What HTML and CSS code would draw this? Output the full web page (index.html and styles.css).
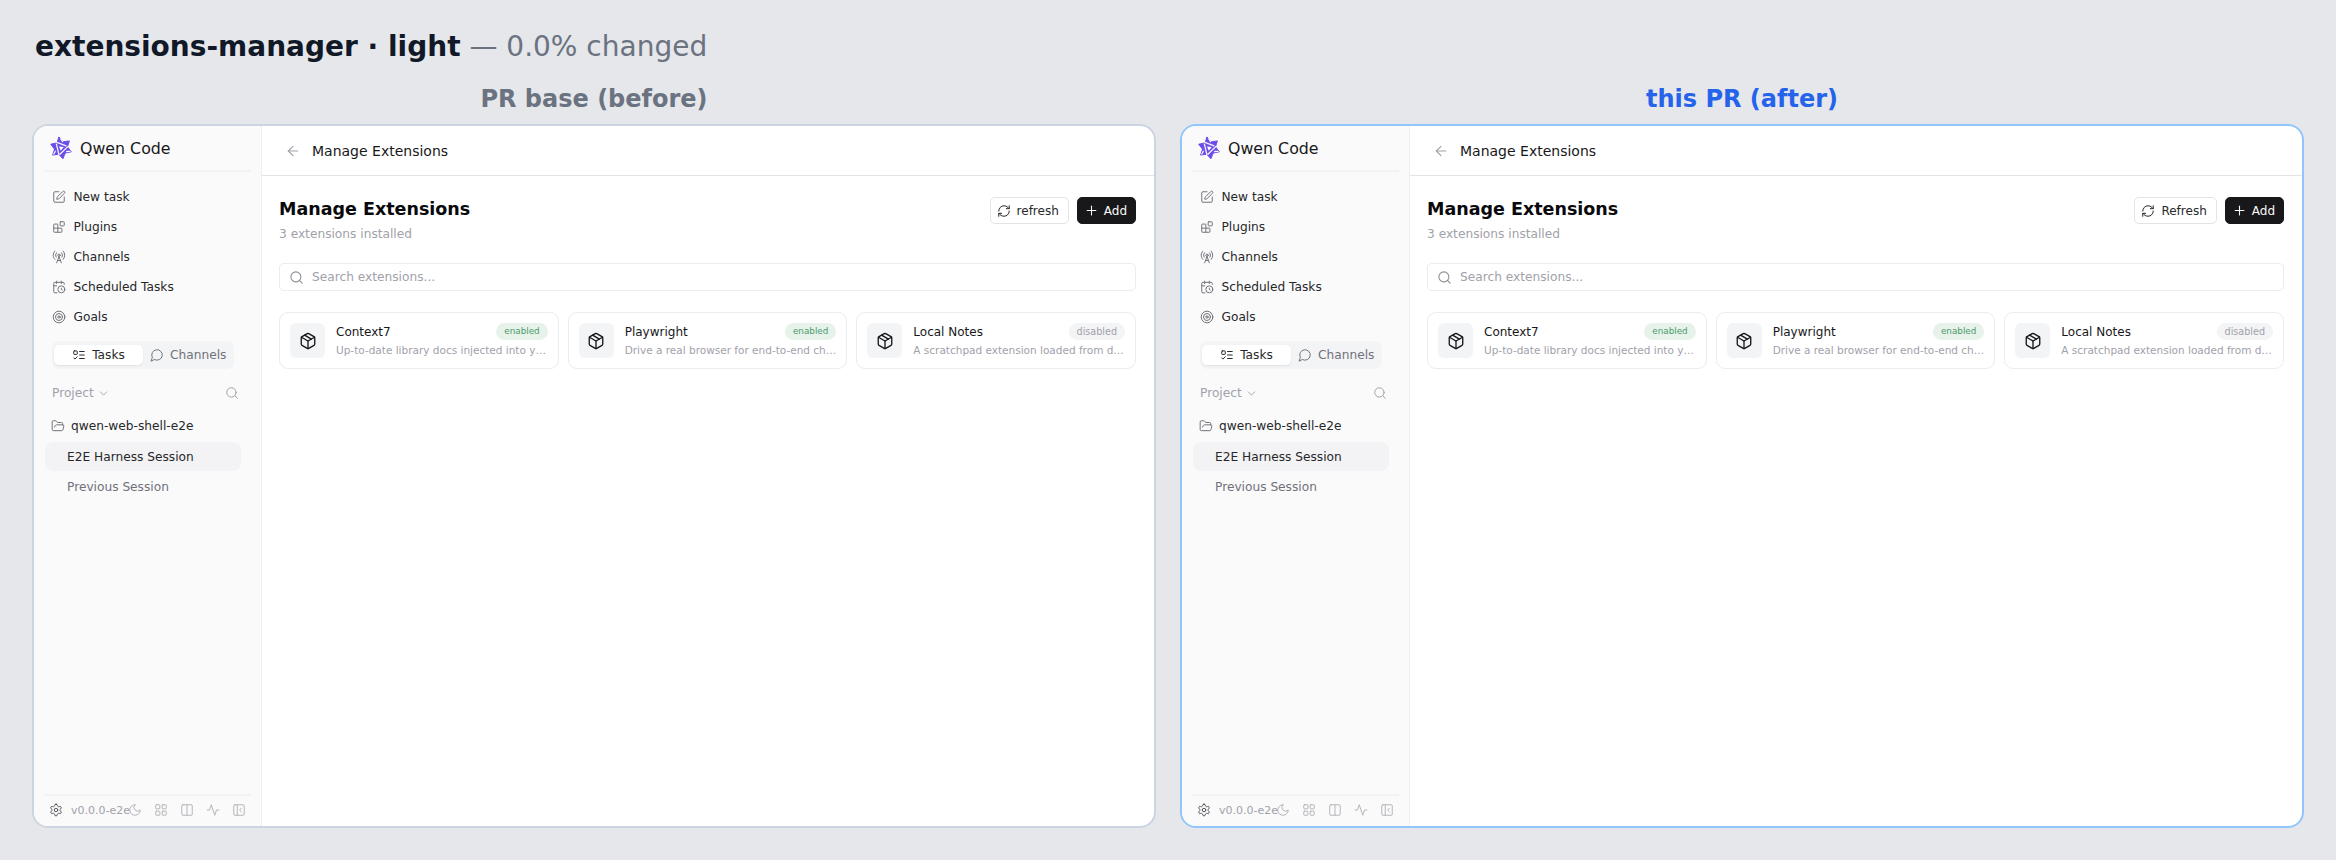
FILE: index.html
```html
<!DOCTYPE html>
<html lang="en">
<head>
<meta charset="utf-8">
<title>extensions-manager · light</title>
<link rel="stylesheet" href="styles.css">
</head>
<body>
<svg class="defs" width="0" height="0" aria-hidden="true">
  <symbol id="logo" viewBox="0 0 24 24">
    <path d="M10.100 1.200 14.300 5.800 20.400 4.900 18.500 10.850 22.300 15.800 16.200 17.050 13.900 22.800 9.700 18.200 3.600 19.100 5.500 13.150 1.700 8.200 7.750 6.950Z" fill="#6d4de8" stroke="#6d4de8" stroke-width="1" stroke-linejoin="round"/>
    <path d="M10 10.400 14.700 11 11.800 14.800Z" fill="#fff" stroke="none"/>
    <path d="M8 6.400 17 9.800M18.800 10.600 11.200 18M9.900 18.700 7.400 8.200M11.800 2.800 13.600 5.600M21 15.400 17.700 15.500M4.800 18 6.300 15.300" fill="none" stroke="#f5f3ff" stroke-width="1.300" stroke-linecap="round"/>
  </symbol>
  <symbol id="pen" viewBox="0 0 24 24"><path d="M12 3H5a2 2 0 0 0-2 2v14a2 2 0 0 0 2 2h14a2 2 0 0 0 2-2v-7"/><path d="M18.375 2.625a1 1 0 0 1 3 3l-9.013 9.014a2 2 0 0 1-.853.505l-2.873.84a.5.5 0 0 1-.62-.62l.84-2.873a2 2 0 0 1 .506-.852z"/></symbol>
  <symbol id="blocks" viewBox="0 0 24 24"><rect width="7" height="7" x="14" y="3" rx="1"/><path d="M10 21V8a1 1 0 0 0-1-1H4a1 1 0 0 0-1 1v12a1 1 0 0 0 1 1h12a1 1 0 0 0 1-1v-5a1 1 0 0 0-1-1H3"/></symbol>
  <symbol id="tower" viewBox="0 0 24 24"><path d="M4.900 16.100C1 12.200 1 5.800 4.900 1.900"/><path d="M7.800 4.700a6.140 6.140 0 0 0-.8 7.500"/><circle cx="12" cy="9" r="2"/><path d="M16.200 4.800c2 2 2.260 5.110.8 7.470"/><path d="M19.100 1.900a9.960 9.960 0 0 1 0 14.100"/><path d="M9.500 18h5"/><path d="m8 22 4-11 4 11"/></symbol>
  <symbol id="calclock" viewBox="0 0 24 24"><path d="M16 14v2.200l1.600 1"/><path d="M16 2v4"/><path d="M21 7.500V6a2 2 0 0 0-2-2H5a2 2 0 0 0-2 2v14a2 2 0 0 0 2 2h3.500"/><path d="M3 10h5"/><path d="M8 2v4"/><circle cx="16" cy="16" r="6"/></symbol>
  <symbol id="target" viewBox="0 0 24 24"><circle cx="12" cy="12" r="10"/><circle cx="12" cy="12" r="6"/><circle cx="12" cy="12" r="2"/></symbol>
  <symbol id="todo" viewBox="0 0 24 24"><rect x="3" y="5" width="6" height="6" rx="1"/><path d="m3 17 2 2 4-4"/><path d="M13 6h8"/><path d="M13 12h8"/><path d="M13 18h8"/></symbol>
  <symbol id="message" viewBox="0 0 24 24"><path d="M7.900 20A9 9 0 1 0 4 16.100L2 22Z"/></symbol>
  <symbol id="chevron" viewBox="0 0 24 24"><path d="m6 9 6 6 6-6"/></symbol>
  <symbol id="search" viewBox="0 0 24 24"><circle cx="11" cy="11" r="8"/><path d="m21 21-4.300-4.300"/></symbol>
  <symbol id="folder" viewBox="0 0 24 24"><path d="m6 14 1.500-2.900A2 2 0 0 1 9.240 10H20a2 2 0 0 1 1.940 2.500l-1.540 6a2 2 0 0 1-1.950 1.500H4a2 2 0 0 1-2-2V5a2 2 0 0 1 2-2h3.900a2 2 0 0 1 1.690.9l.81 1.200a2 2 0 0 0 1.670.9H18a2 2 0 0 1 2 2v2"/></symbol>
  <symbol id="gear" viewBox="0 0 24 24"><path d="M12.220 2h-.44a2 2 0 0 0-2 2v.18a2 2 0 0 1-1 1.730l-.43.25a2 2 0 0 1-2 0l-.15-.08a2 2 0 0 0-2.730.73l-.22.38a2 2 0 0 0 .73 2.730l.15.1a2 2 0 0 1 1 1.720v.51a2 2 0 0 1-1 1.740l-.15.09a2 2 0 0 0-.73 2.730l.22.38a2 2 0 0 0 2.730.73l.15-.08a2 2 0 0 1 2 0l.43.25a2 2 0 0 1 1 1.730V20a2 2 0 0 0 2 2h.44a2 2 0 0 0 2-2v-.18a2 2 0 0 1 1-1.730l.43-.25a2 2 0 0 1 2 0l.15.08a2 2 0 0 0 2.730-.73l.22-.39a2 2 0 0 0-.73-2.730l-.15-.08a2 2 0 0 1-1-1.740v-.5a2 2 0 0 1 1-1.740l.15-.09a2 2 0 0 0 .73-2.730l-.22-.38a2 2 0 0 0-2.730-.73l-.15.08a2 2 0 0 1-2 0l-.43-.25a2 2 0 0 1-1-1.730V4a2 2 0 0 0-2-2z"/><circle cx="12" cy="12" r="3"/></symbol>
  <symbol id="moon" viewBox="0 0 24 24"><path d="M12 3a6 6 0 0 0 9 9 9 9 0 1 1-9-9Z"/></symbol>
  <symbol id="grid" viewBox="0 0 24 24"><rect width="7" height="7" x="3" y="3" rx="1"/><rect width="7" height="7" x="14" y="3" rx="1"/><rect width="7" height="7" x="14" y="14" rx="1"/><rect width="7" height="7" x="3" y="14" rx="1"/></symbol>
  <symbol id="columns" viewBox="0 0 24 24"><rect width="18" height="18" x="3" y="3" rx="2"/><path d="M12 3v18"/></symbol>
  <symbol id="activity" viewBox="0 0 24 24"><path d="M22 12h-4l-3 9L9 3l-3 9H2"/></symbol>
  <symbol id="panel" viewBox="0 0 24 24"><rect width="18" height="18" x="3" y="3" rx="2"/><path d="M9 3v18"/><path d="m16 15-3-3 3-3"/></symbol>
  <symbol id="arrow" viewBox="0 0 24 24"><path d="m12 19-7-7 7-7"/><path d="M19 12H5"/></symbol>
  <symbol id="refresh" viewBox="0 0 24 24"><path d="M3 12a9 9 0 0 1 9-9 9.750 9.750 0 0 1 6.740 2.740L21 8"/><path d="M21 3v5h-5"/><path d="M21 12a9 9 0 0 1-9 9 9.750 9.750 0 0 1-6.740-2.740L3 16"/><path d="M8 16H3v5"/></symbol>
  <symbol id="plus" viewBox="0 0 24 24"><path d="M5 12h14"/><path d="M12 5v14"/></symbol>
  <symbol id="package" viewBox="0 0 24 24"><path d="M11 21.730a2 2 0 0 0 2 0l7-4A2 2 0 0 0 21 16V8a2 2 0 0 0-1-1.730l-7-4a2 2 0 0 0-2 0l-7 4A2 2 0 0 0 3 8v8a2 2 0 0 0 1 1.730z"/><path d="M12 22V12"/><path d="m3.300 7 8.700 5 8.700-5"/><path d="m7.500 4.270 9 5.150"/></symbol>
</svg>

<h1 class="title"><b>extensions-manager · light</b> <span>— 0.0% changed</span></h1>

<div class="compare">
  <section class="col">
    <h2 class="label">PR base (before)</h2>
    <div class="frame">
      <aside class="sidebar">
        <div class="brand"><svg class="logo"><use href="#logo"/></svg><span>Qwen Code</span></div>
        <nav class="nav">
          <a class="nav-item"><svg class="ic"><use href="#pen"/></svg>New task</a>
          <a class="nav-item"><svg class="ic"><use href="#blocks"/></svg>Plugins</a>
          <a class="nav-item"><svg class="ic"><use href="#tower"/></svg>Channels</a>
          <a class="nav-item"><svg class="ic"><use href="#calclock"/></svg>Scheduled Tasks</a>
          <a class="nav-item"><svg class="ic"><use href="#target"/></svg>Goals</a>
        </nav>
        <div class="segment">
          <div class="seg active"><svg class="ic"><use href="#todo"/></svg>Tasks</div>
          <div class="seg"><svg class="ic"><use href="#message"/></svg>Channels</div>
        </div>
        <div class="project-head"><span class="project-label">Project<svg class="ic-sm"><use href="#chevron"/></svg></span><svg class="ic-sm search-ic"><use href="#search"/></svg></div>
        <div class="folder"><svg class="ic"><use href="#folder"/></svg>qwen-web-shell-e2e</div>
        <div class="session current">E2E Harness Session</div>
        <div class="session">Previous Session</div>
        <footer class="foot">
          <div class="foot-left"><svg class="ic gear"><use href="#gear"/></svg><span class="version">v0.0.0-e2e</span></div>
          <svg class="ic fi"><use href="#moon"/></svg>
          <svg class="ic fi"><use href="#grid"/></svg>
          <svg class="ic fi"><use href="#columns"/></svg>
          <svg class="ic fi"><use href="#activity"/></svg>
          <svg class="ic fi"><use href="#panel"/></svg>
        </footer>
      </aside>
      <main class="main">
        <header class="topbar"><svg class="back"><use href="#arrow"/></svg><span>Manage Extensions</span></header>
        <div class="content">
          <div class="head">
            <div><div class="heading">Manage Extensions</div><div class="sub">3 extensions installed</div></div>
            <div class="actions">
              <button class="btn"><svg class="ic"><use href="#refresh"/></svg>refresh</button>
              <button class="btn primary"><svg class="ic"><use href="#plus"/></svg>Add</button>
            </div>
          </div>
          <div class="searchbox"><svg class="search-field"><use href="#search"/></svg>Search extensions...</div>
          <div class="cards">
            <article class="card"><div class="pkg"><svg><use href="#package"/></svg></div><div class="card-body"><div class="card-top"><span class="name">Context7</span><span class="badge on">enabled</span></div><div class="desc">Up-to-date library docs injected into your prompts</div></div></article>
            <article class="card"><div class="pkg"><svg><use href="#package"/></svg></div><div class="card-body"><div class="card-top"><span class="name">Playwright</span><span class="badge on">enabled</span></div><div class="desc">Drive a real browser for end-to-end checks and more</div></div></article>
            <article class="card"><div class="pkg"><svg><use href="#package"/></svg></div><div class="card-body"><div class="card-top"><span class="name">Local Notes</span><span class="badge">disabled</span></div><div class="desc">A scratchpad extension loaded from disk at startup</div></div></article>
          </div>
        </div>
      </main>
    </div>
  </section>

  <section class="col after">
    <h2 class="label">this PR (after)</h2>
    <div class="frame">
      <aside class="sidebar">
        <div class="brand"><svg class="logo"><use href="#logo"/></svg><span>Qwen Code</span></div>
        <nav class="nav">
          <a class="nav-item"><svg class="ic"><use href="#pen"/></svg>New task</a>
          <a class="nav-item"><svg class="ic"><use href="#blocks"/></svg>Plugins</a>
          <a class="nav-item"><svg class="ic"><use href="#tower"/></svg>Channels</a>
          <a class="nav-item"><svg class="ic"><use href="#calclock"/></svg>Scheduled Tasks</a>
          <a class="nav-item"><svg class="ic"><use href="#target"/></svg>Goals</a>
        </nav>
        <div class="segment">
          <div class="seg active"><svg class="ic"><use href="#todo"/></svg>Tasks</div>
          <div class="seg"><svg class="ic"><use href="#message"/></svg>Channels</div>
        </div>
        <div class="project-head"><span class="project-label">Project<svg class="ic-sm"><use href="#chevron"/></svg></span><svg class="ic-sm search-ic"><use href="#search"/></svg></div>
        <div class="folder"><svg class="ic"><use href="#folder"/></svg>qwen-web-shell-e2e</div>
        <div class="session current">E2E Harness Session</div>
        <div class="session">Previous Session</div>
        <footer class="foot">
          <div class="foot-left"><svg class="ic gear"><use href="#gear"/></svg><span class="version">v0.0.0-e2e</span></div>
          <svg class="ic fi"><use href="#moon"/></svg>
          <svg class="ic fi"><use href="#grid"/></svg>
          <svg class="ic fi"><use href="#columns"/></svg>
          <svg class="ic fi"><use href="#activity"/></svg>
          <svg class="ic fi"><use href="#panel"/></svg>
        </footer>
      </aside>
      <main class="main">
        <header class="topbar"><svg class="back"><use href="#arrow"/></svg><span>Manage Extensions</span></header>
        <div class="content">
          <div class="head">
            <div><div class="heading">Manage Extensions</div><div class="sub">3 extensions installed</div></div>
            <div class="actions">
              <button class="btn"><svg class="ic"><use href="#refresh"/></svg>Refresh</button>
              <button class="btn primary"><svg class="ic"><use href="#plus"/></svg>Add</button>
            </div>
          </div>
          <div class="searchbox"><svg class="search-field"><use href="#search"/></svg>Search extensions...</div>
          <div class="cards">
            <article class="card"><div class="pkg"><svg><use href="#package"/></svg></div><div class="card-body"><div class="card-top"><span class="name">Context7</span><span class="badge on">enabled</span></div><div class="desc">Up-to-date library docs injected into your prompts</div></div></article>
            <article class="card"><div class="pkg"><svg><use href="#package"/></svg></div><div class="card-body"><div class="card-top"><span class="name">Playwright</span><span class="badge on">enabled</span></div><div class="desc">Drive a real browser for end-to-end checks and more</div></div></article>
            <article class="card"><div class="pkg"><svg><use href="#package"/></svg></div><div class="card-body"><div class="card-top"><span class="name">Local Notes</span><span class="badge">disabled</span></div><div class="desc">A scratchpad extension loaded from disk at startup</div></div></article>
          </div>
        </div>
      </main>
    </div>
  </section>
</div>
</body>
</html>
```

FILE: styles.css
```css
* { box-sizing: border-box; }
html, body { margin: 0; height: 860px; overflow: hidden; }
body { background: #e5e7eb; font-family: "DejaVu Sans", sans-serif; color: #18181b; padding: 0 32px; }
.defs { display: block; height: 0; }
svg { display: block; flex: none; fill: none; stroke: currentColor; stroke-width: 2; stroke-linecap: round; stroke-linejoin: round; }

.title { margin: 0; height: 92px; padding: 30px 0 0 3px; font-size: 28px; line-height: 34px; font-weight: 400; color: #6b7280; white-space: nowrap; }
.title b { color: #111827; font-weight: 700; }

.compare { display: flex; gap: 24px; }
.col { width: 1124px; }
.label { margin: -8px 0 0; height: 40px; line-height: 30px; text-align: center; font-size: 24px; font-weight: 700; color: #6b7280; }
.after .label { color: #2563eb; }
.frame { display: flex; height: 704px; background: #fff; border: 2px solid #cbd5e1; border-radius: 16px; overflow: hidden; }
.after .frame { border-color: #93c5fd; }

.sidebar { width: 228px; flex: none; display: flex; flex-direction: column; padding: 0 10px; background: #fafafa; border-right: 1px solid #efeff1; }
.brand { display: flex; align-items: center; gap: 7px; height: 46px; padding: 0 5px; border-bottom: 2px solid #f2f2f3; font-size: 15.800px; color: #18181b; }
.logo { width: 24px; height: 24px; stroke: none; }
.nav { display: flex; flex-direction: column; padding-top: 10px; }
.nav-item { display: flex; align-items: center; gap: 7.500px; height: 30px; padding-left: 8px; font-size: 12.200px; color: #27272a; }
.ic { width: 14px; height: 14px; stroke-width: 1.700; color: #71717a; }

.segment { display: flex; gap: 4px; width: 182px; height: 28px; margin: 9px 0 0 8px; padding: 4px 2px; background: #f3f4f6; border-radius: 7px; font-size: 12.200px; }
.seg { display: flex; align-items: center; gap: 6px; padding-left: 3px; color: #71717a; white-space: nowrap; }
.seg.active { width: 89px; padding-left: 0; justify-content: center; background: #fff; border-radius: 5px; color: #27272a; box-shadow: 0 1px 2px rgba(0,0,0,.08); }
.seg.active .ic { color: #27272a; }

.project-head { display: flex; align-items: center; justify-content: space-between; height: 24px; margin: 12px 12px 0 8px; font-size: 12.200px; color: #a1a1aa; }
.project-label { display: flex; align-items: center; gap: 3px; }
.ic-sm { width: 13px; height: 13px; stroke-width: 1.700; color: #a1a1aa; }
.search-ic { width: 14px; height: 14px; }
.folder { display: flex; align-items: center; gap: 6px; height: 30px; margin-top: 6px; padding-left: 7px; font-size: 12.200px; color: #27272a; }
.session { height: 29px; line-height: 29px; margin: 1px 10px 0 1px; padding: 1px 0 0 22px; border-radius: 8px; font-size: 12.200px; color: #71717a; }
.session.current { background: #f3f3f5; color: #27272a; }

.foot { display: flex; align-items: center; height: 32px; margin-top: auto; padding: 0 5px 2px; border-top: 2px solid #f2f2f3; }
.foot-left { display: flex; align-items: center; gap: 8px; width: 79px; flex: none; }
.gear { color: #52525b; }
.version { font-size: 11px; color: #a1a1aa; white-space: nowrap; }
.fi { color: #b4b4bb; }
.fi + .fi { margin-left: 12px; }

.main { flex: 1; min-width: 0; display: flex; flex-direction: column; }
.topbar { display: flex; align-items: center; gap: 11px; height: 50px; padding: 0 0 0 23px; border-bottom: 1px solid #e4e4e7; font-size: 14px; color: #18181b; }
.back { width: 16px; height: 16px; stroke-width: 1.700; color: #a1a1aa; }
.content { padding: 21px 18px 0 17px; }
.head { display: flex; justify-content: space-between; align-items: flex-start; }
.heading { font-size: 17.500px; line-height: 24px; font-weight: 700; color: #09090b; }
.sub { margin-top: 4px; font-size: 12.200px; line-height: 18px; color: #a1a1aa; }
.actions { display: flex; gap: 8px; }
.btn { display: flex; align-items: center; gap: 6px; height: 27px; padding: 0 9px 0 6px; font: inherit; font-size: 12px; color: #27272a; background: #fff; border: 1px solid #e4e4e7; border-radius: 5px; }
.btn .ic { color: #27272a; }
.btn.primary { gap: 5px; padding-right: 8px; background: #18181b; border-color: #18181b; color: #fafafa; }
.btn.primary .ic { width: 15px; height: 15px; color: #fafafa; }

.searchbox { display: flex; align-items: center; gap: 8px; height: 28px; margin-top: 20px; padding-left: 9px; border: 1px solid #ececee; border-radius: 5px; font-size: 12.200px; color: #a1a1aa; }
.search-field { width: 15px; height: 15px; stroke-width: 1.700; color: #8c8c94; }
.cards { display: grid; grid-template-columns: repeat(3, 1fr); gap: 9px; margin-top: 21px; }
.card { display: flex; gap: 11px; height: 57px; padding: 10px; border: 1px solid #ececee; border-radius: 9px; background: #fff; min-width: 0; }
.pkg { display: flex; align-items: center; justify-content: center; width: 35px; height: 35px; flex: none; background: #f3f4f6; border-radius: 6px; color: #18181b; }
.pkg svg { width: 18px; height: 18px; stroke-width: 1.800; }
.card-body { flex: 1; min-width: 0; }
.card-top { display: flex; align-items: center; justify-content: space-between; height: 17px; }
.name { font-size: 12px; color: #18181b; }
.badge { height: 17px; line-height: 17px; padding: 0 8px; font-size: 9.600px; border-radius: 9px; background: #f3f4f6; color: #a1a1aa; }
.badge.on { font-size: 8.800px; background: #e6f2ea; color: #4b9a6b; }
.desc { margin-top: 2px; font-size: 10.500px; line-height: 16px; color: #a1a1aa; white-space: nowrap; overflow: hidden; text-overflow: ellipsis; }
```
